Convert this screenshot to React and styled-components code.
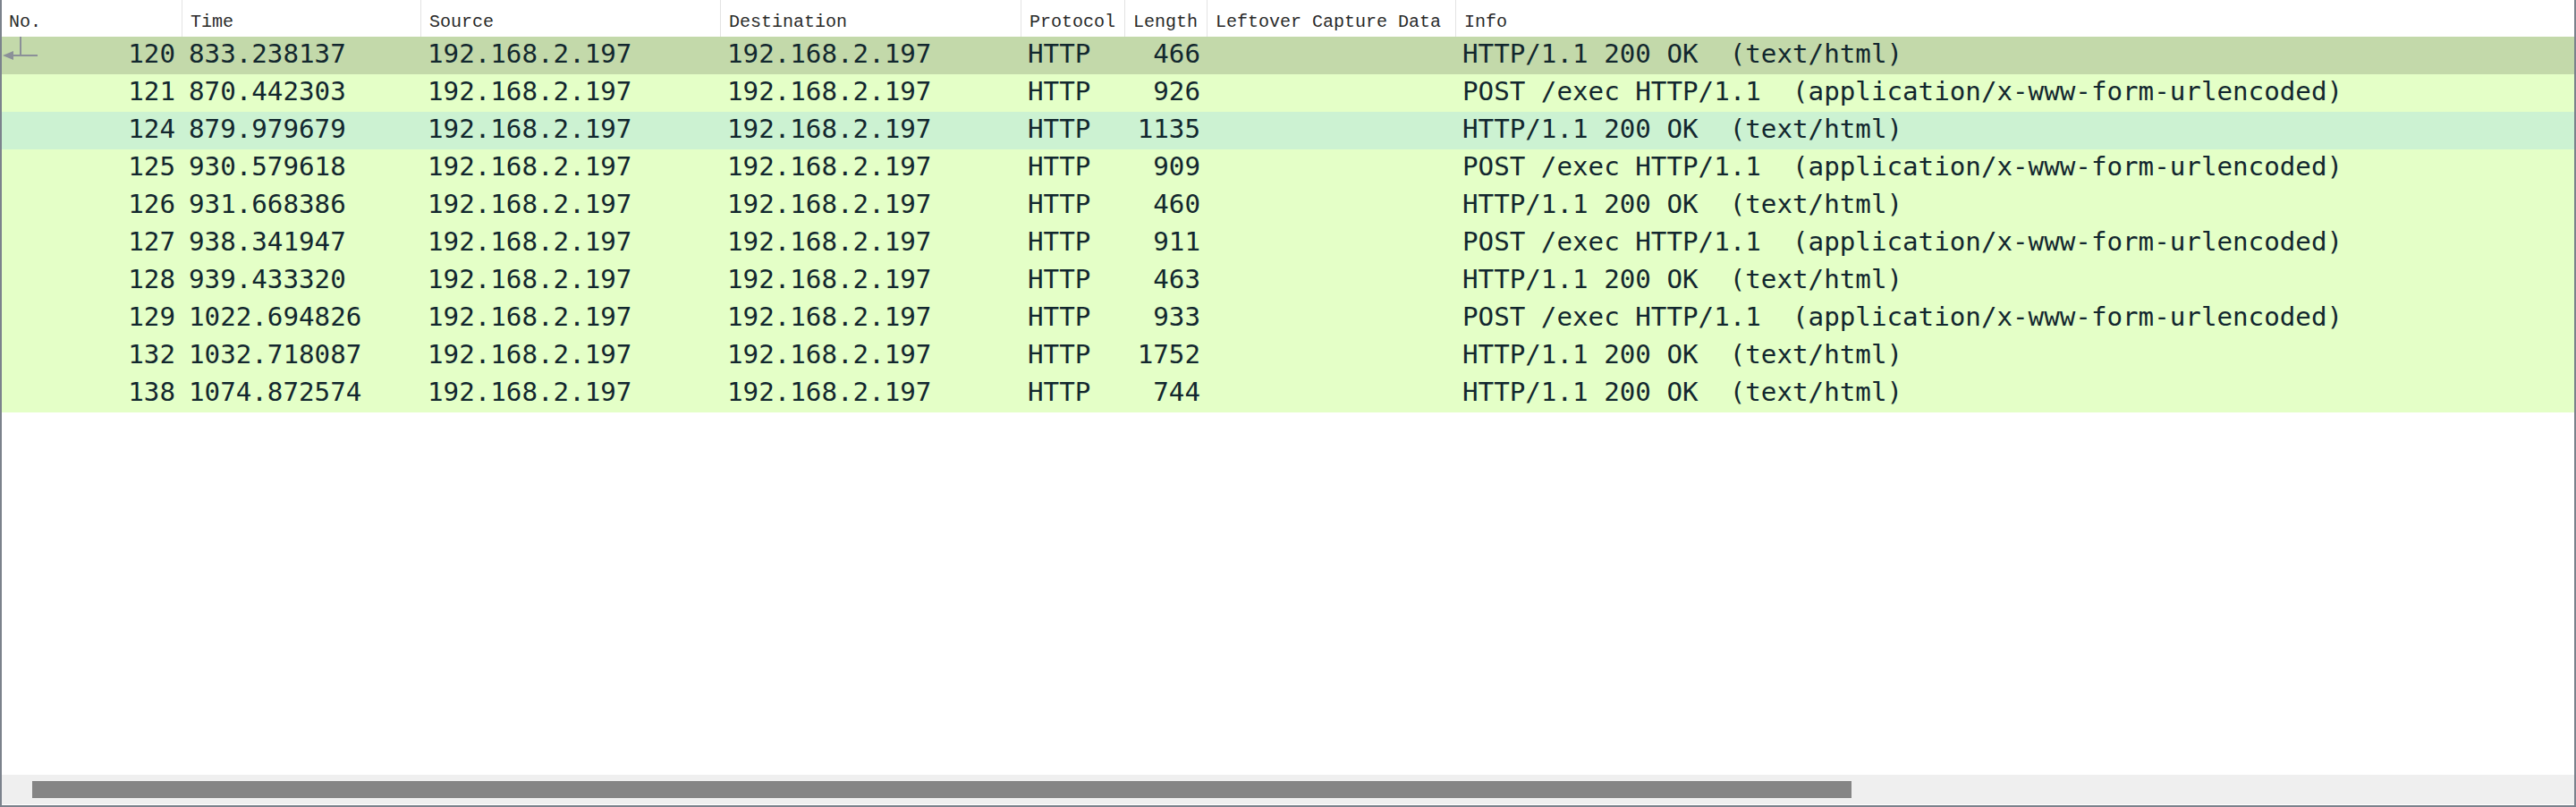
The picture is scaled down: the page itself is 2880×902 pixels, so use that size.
import React from "react";
import styled, { createGlobalStyle } from "styled-components";

const GlobalStyle = createGlobalStyle`
  html, body { margin: 0; padding: 0; background: #ffffff; }
  #root { width: 2880px; height: 902px; }
`;

const COLS = "201px 267px 335px 336px 116px 92px 278px 1fr";

const Frame = styled.div`
  width: 2880px;
  height: 902px;
  box-sizing: border-box;
  border-left: 2px solid #7b828c;
  border-right: 2px solid #7b828c;
  border-bottom: 2px solid #7b828c;
  display: flex;
  flex-direction: column;
  background: #ffffff;
  overflow: hidden;
`;

const HeaderRow = styled.div`
  display: grid;
  grid-template-columns: ${COLS};
  height: 41px;
  background: #ffffff;
  flex: none;
`;

const HeaderCell = styled.div`
  box-sizing: border-box;
  height: 41px;
  padding: 8px 0 0 ${(p) => (p.$first ? 8 : 9)}px;
  line-height: 33px;
  font-family: "Liberation Mono", "DejaVu Sans Mono", monospace;
  font-size: 20px;
  color: #2a2a2a;
  white-space: nowrap;
  overflow: hidden;
  border-left: ${(p) => (p.$first ? "none" : "1px solid #e3e3e3")};
`;

const List = styled.div`
  flex: 1;
  display: flex;
  flex-direction: column;
  background: #ffffff;
`;

const ROW_BG = {
  related: "#c3d9aa",
  hover: "#ccf2d2",
  normal: "#e4ffc7",
};

const Row = styled.div`
  display: grid;
  grid-template-columns: ${COLS};
  height: 42px;
  background: ${(p) => ROW_BG[p.$kind]};
  color: #12272e;
  font-family: "DejaVu Sans Mono", "Liberation Mono", monospace;
  font-size: 29.2px;
`;

const Cell = styled.div`
  position: relative;
  box-sizing: border-box;
  height: 42px;
  line-height: 38px;
  padding: 0 ${(p) => (p.$right ? "7px" : "0")} 4px ${(p) => (p.$right ? "0" : "8px")};
  text-align: ${(p) => (p.$right ? "right" : "left")};
  white-space: pre;
  overflow: hidden;
`;

const RelIcon = styled.svg`
  position: absolute;
  left: 0;
  top: 0;
  width: 44px;
  height: 30px;
`;

const HScroll = styled.div`
  flex: none;
  height: 33px;
  margin-bottom: 1px;
  background: #efefef;
  box-sizing: border-box;
  padding: 7px 0 0 34px;
`;

const Thumb = styled.div`
  height: 19px;
  width: ${(p) => p.$w}px;
  background: #858585;
`;

const columns = [
  "No.",
  "Time",
  "Source",
  "Destination",
  "Protocol",
  "Length",
  "Leftover Capture Data",
  "Info",
];

const RESP = "HTTP/1.1 200 OK  (text/html)";
const REQ = "POST /exec HTTP/1.1  (application/x-www-form-urlencoded)";

const packets = [
  { no: 120, time: "833.238137", len: 466, info: RESP, kind: "related", rel: true },
  { no: 121, time: "870.442303", len: 926, info: REQ, kind: "normal" },
  { no: 124, time: "879.979679", len: 1135, info: RESP, kind: "hover" },
  { no: 125, time: "930.579618", len: 909, info: REQ, kind: "normal" },
  { no: 126, time: "931.668386", len: 460, info: RESP, kind: "normal" },
  { no: 127, time: "938.341947", len: 911, info: REQ, kind: "normal" },
  { no: 128, time: "939.433320", len: 463, info: RESP, kind: "normal" },
  { no: 129, time: "1022.694826", len: 933, info: REQ, kind: "normal" },
  { no: 132, time: "1032.718087", len: 1752, info: RESP, kind: "normal" },
  { no: 138, time: "1074.872574", len: 744, info: RESP, kind: "normal" },
];

function RelatedArrow() {
  return (
    <RelIcon viewBox="0 0 44 30">
      <line x1="21" y1="0" x2="21" y2="21" stroke="#8b9098" strokeWidth="2" />
      <line x1="8" y1="21" x2="40" y2="21" stroke="#8b9098" strokeWidth="2" />
      <polygon points="1,21 13,16 13,26" fill="#8b9098" />
    </RelIcon>
  );
}

export default function App() {
  return (
    <>
      <GlobalStyle />
      <Frame>
        <HeaderRow>
          {columns.map((c, i) => (
            <HeaderCell key={c} $first={i === 0}>
              {c}
            </HeaderCell>
          ))}
        </HeaderRow>
        <List>
          {packets.map((p) => (
            <Row key={p.no} $kind={p.kind}>
              <Cell $right>
                {p.rel && <RelatedArrow />}
                {p.no}
              </Cell>
              <Cell>{p.time}</Cell>
              <Cell>192.168.2.197</Cell>
              <Cell>192.168.2.197</Cell>
              <Cell>HTTP</Cell>
              <Cell $right>{p.len}</Cell>
              <Cell></Cell>
              <Cell>{p.info}</Cell>
            </Row>
          ))}
        </List>
        <HScroll>
          <Thumb $w={2034} />
        </HScroll>
      </Frame>
    </>
  );
}
